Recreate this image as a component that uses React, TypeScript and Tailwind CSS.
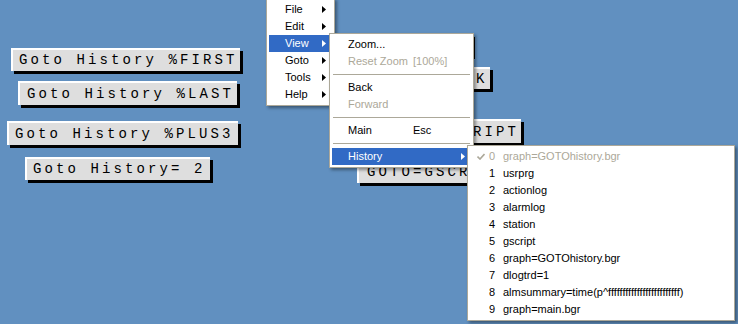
import React from "react";

const btn =
    "absolute flex items-center overflow-hidden whitespace-nowrap border-l-2 border-t-2 border-white bg-[#dedede] [font-family:'Liberation_Mono',monospace] text-[14px] tracking-[3.1px] text-black shadow-[3px_3px_0_#000]";

const menu =
    "absolute border border-[#aca899] bg-white p-[2px] [font-family:'Liberation_Sans',Arial,sans-serif] text-[11px] text-black shadow-[2px_2px_3px_rgba(0,0,0,0.4)]";

function Arrow({ color = "#000" }: { color?: string }) {
    return (
        <svg width="4" height="7" viewBox="0 0 4 7">
            <path d="M0 0 L4 3.5 L0 7 Z" fill={color} />
        </svg>
    );
}

function Separator() {
    return (
        <div className="flex h-[9px] items-center px-[1px]">
            <div className="h-px w-full bg-[#aca899]" />
        </div>
    );
}

const history = [
    "graph=GOTOhistory.bgr",
    "usrprg",
    "actionlog",
    "alarmlog",
    "station",
    "gscript",
    "graph=GOTOhistory.bgr",
    "dlogtrd=1",
    "almsummary=time(p^fffffffffffffffffffffffff)",
    "graph=main.bgr",
];

export default function App() {
    return (
        <div className="relative h-[324px] w-[738px] overflow-hidden bg-[#6190c0]">
            {/* Display buttons */}
            <div className={`${btn} left-[11px] top-[48px] h-[23px] w-[229px] pl-[6px]`}>Goto History %FIRST</div>
            <div className={`${btn} left-[18px] top-[81px] h-[24px] w-[219px] pl-[7px]`}>Goto History %LAST</div>
            <div className={`${btn} left-[7px] top-[121px] h-[24px] w-[231px] pl-[6px]`}>Goto History %PLUS3</div>
            <div className={`${btn} left-[25px] top-[157px] h-[23px] w-[185px] pl-[6px]`}>Goto History= 2</div>

            {/* Buttons partly under the menus: only the visible part of their caption */}
            <div className={`${btn} left-[340px] top-[34px] h-[22px] w-[132px]`} />
            <div className={`${btn} left-[272px] top-[67px] h-[22px] w-[218px] pl-[202px]`}>K</div>
            <div className={`${btn} left-[361px] top-[119px] h-[24px] w-[160px] pl-[110px]`}>RIPT</div>
            <div className={`${btn} left-[357px] top-[160px] h-[23px] w-[170px] pl-[8px]`}>GOTO=GSCR</div>

            {/* Main popup menu */}
            <div className={`${menu} left-[266px] top-[-2px] w-[69px]`}>
                {["File", "Edit", "View", "Goto", "Tools", "Help"].map((item) => (
                    <div
                        key={item}
                        className={`flex h-[17px] items-center justify-between pl-[16px] pr-[6px] leading-[17px] ${
                            item === "View" ? "bg-[#316ac5] text-white" : ""
                        }`}
                    >
                        <span>{item}</span>
                        <Arrow color={item === "View" ? "#fff" : "#000"} />
                    </div>
                ))}
            </div>

            {/* View submenu */}
            <div className={`${menu} left-[329px] top-[33px] w-[145px]`}>
                <div className="flex h-[17px] items-center pl-[16px] leading-[17px]">Zoom...</div>
                <div className="flex h-[17px] items-center pl-[16px] leading-[17px] text-[#aca899]">
                    <span className="w-[65px]">Reset Zoom</span>
                    <span>[100%]</span>
                </div>
                <Separator />
                <div className="flex h-[17px] items-center pl-[16px] leading-[17px]">Back</div>
                <div className="flex h-[17px] items-center pl-[16px] leading-[17px] text-[#aca899]">Forward</div>
                <Separator />
                <div className="flex h-[17px] items-center pl-[16px] leading-[17px]">
                    <span className="w-[65px]">Main</span>
                    <span>Esc</span>
                </div>
                <Separator />
                <div className="flex h-[17px] items-center justify-between bg-[#316ac5] pl-[16px] pr-[6px] leading-[17px] text-white">
                    <span>History</span>
                    <Arrow color="#fff" />
                </div>
            </div>

            {/* History submenu */}
            <div className={`${menu} left-[467px] top-[145px] w-[268px]`}>
                {history.map((entry, i) => (
                    <div
                        key={i}
                        className={`flex h-[17px] items-center leading-[17px] ${i === 0 ? "text-[#aca899]" : ""}`}
                    >
                        <span className="flex w-[19px] justify-center pl-[2px]">
                            {i === 0 && (
                                <svg width="8" height="7" viewBox="0 0 8 7">
                                    <path d="M0.5 3.5 L3 6 L7.5 1" fill="none" stroke="#aca899" strokeWidth="1.6" />
                                </svg>
                            )}
                        </span>
                        <span className="w-[14px]">{i}</span>
                        <span>{entry}</span>
                    </div>
                ))}
            </div>
        </div>
    );
}
